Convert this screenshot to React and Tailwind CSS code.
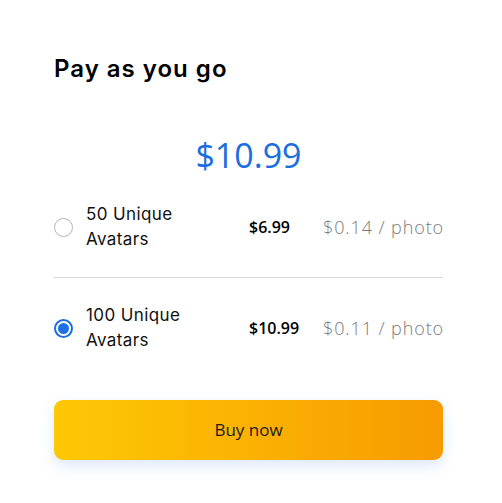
import React, { useState } from "react";

const plans = [
    { id: 50, label: ["50 Unique", "Avatars"], price: "$6.99", per: "$0.14 / photo" },
    { id: 100, label: ["100 Unique", "Avatars"], price: "$10.99", per: "$0.11 / photo" },
];

const Radio = ({ checked }) => (
    <span
        className={`flex h-[19px] w-[19px] shrink-0 items-center justify-center rounded-full border ${
            checked ? "border-2 border-[#1a6fe0]" : "border-[#b5b5b5]"
        }`}
    >
        {checked && <span className="h-[11px] w-[11px] rounded-full bg-[#1f6fe6]" />}
    </span>
);

export default function App() {
    const [selected, setSelected] = useState(100);
    const current = plans.find(p => p.id === selected);

    return (
        <div className="min-h-[503px] w-[502px] bg-white pl-[54px] pr-[59px] pt-[50px] font-['Open_Sans',sans-serif]">
            {/* Title */}
            <h1 className="font-['Inter',sans-serif] text-[24px] font-semibold leading-[38px] tracking-[1px] text-black">
                Pay as you go
            </h1>

            {/* Selected price */}
            <p className="mt-[44px] text-center text-[34px] leading-[46px] text-[#1a6ee0]">{current.price}</p>

            {/* Plans */}
            <div className="mt-[20px] flex flex-col">
                {plans.map((plan, i) => (
                    <label
                        key={plan.id}
                        onClick={() => setSelected(plan.id)}
                        className={`flex cursor-pointer items-center py-[4px] ${
                            i > 0 ? "mt-[21px] border-t border-[#d6d6d6] pt-[25px]" : ""
                        }`}
                    >
                        <Radio checked={selected === plan.id} />
                        <span className="ml-[13px] w-[163px] shrink-0 font-['Inter',sans-serif] text-[17px] leading-[25px] tracking-[0.4px] text-[#111]">
                            {plan.label[0]}
                            <br />
                            {plan.label[1]}
                        </span>
                        <span className="w-[74px] shrink-0 text-[16px] font-semibold text-black">{plan.price}</span>
                        <span className="ml-auto shrink-0 whitespace-nowrap text-[18px] font-light tracking-[0.9px] text-[#7a7a7a]">
                            {plan.per}
                        </span>
                    </label>
                ))}
            </div>

            {/* Action */}
            <button className="mt-[43px] flex h-[60px] w-full items-center justify-center rounded-[9px] bg-gradient-to-r from-[#fdc805] to-[#f79b00] text-[17px] text-[#1a1a1a] shadow-[0_6px_14px_rgba(90,140,230,0.2)]">
                Buy now
            </button>
        </div>
    );
}
